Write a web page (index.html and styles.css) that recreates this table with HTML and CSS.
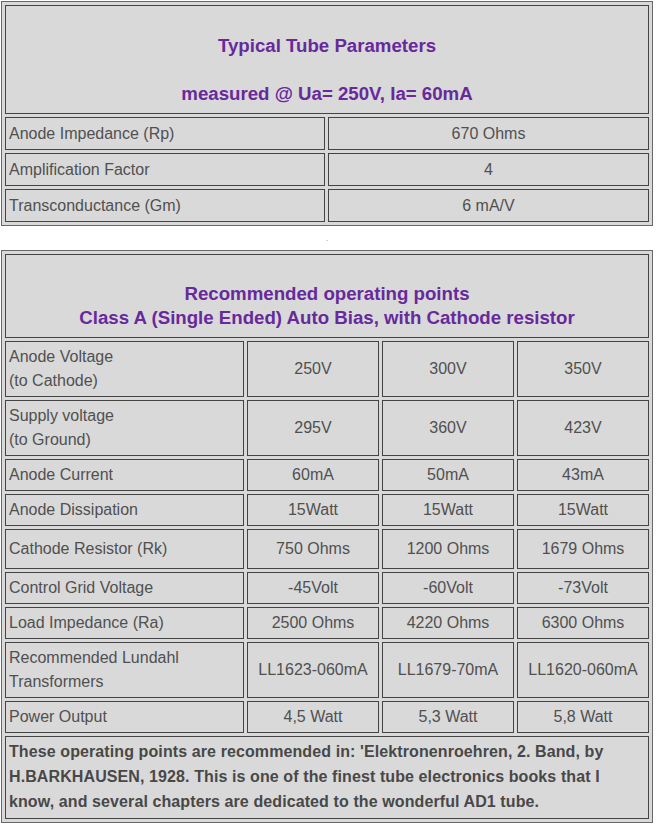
FILE: index.html
```html
<!DOCTYPE html>
<html>
<head>
<meta charset="utf-8">
<link rel="stylesheet" href="styles.css">
</head>
<body>
<div class="page">
  <table class="tbl tbl-params">
    <colgroup><col class="c-label1"><col class="c-val1"></colgroup>
    <tr>
      <td colspan="2" class="head head1">
        <div class="hline">Typical Tube Parameters</div>
        <div class="hline hline-gap">measured @ Ua= 250V, Ia= 60mA</div>
      </td>
    </tr>
    <tr class="r1"><td>Anode Impedance (Rp)</td><td class="val">670 Ohms</td></tr>
    <tr class="r1"><td>Amplification Factor</td><td class="val">4</td></tr>
    <tr class="r1"><td>Transconductance (Gm)</td><td class="val">6 mA/V</td></tr>
  </table>

  <div class="sep">.</div>

  <table class="tbl tbl-points">
    <colgroup><col class="c-label2"><col class="c-val2"><col class="c-val2"><col class="c-val2"></colgroup>
    <tr>
      <td colspan="4" class="head head2">
        <div class="hline2">Recommended operating points</div>
        <div class="hline2">Class A (Single Ended) Auto Bias, with Cathode resistor</div>
      </td>
    </tr>
    <tr><td>Anode Voltage<br>(to Cathode)</td><td class="val">250V</td><td class="val">300V</td><td class="val">350V</td></tr>
    <tr><td>Supply voltage<br>(to Ground)</td><td class="val">295V</td><td class="val">360V</td><td class="val">423V</td></tr>
    <tr><td>Anode Current</td><td class="val">60mA</td><td class="val">50mA</td><td class="val">43mA</td></tr>
    <tr><td>Anode Dissipation</td><td class="val">15Watt</td><td class="val">15Watt</td><td class="val">15Watt</td></tr>
    <tr class="tall"><td>Cathode Resistor (Rk)</td><td class="val">750 Ohms</td><td class="val">1200 Ohms</td><td class="val">1679 Ohms</td></tr>
    <tr><td>Control Grid Voltage</td><td class="val">-45Volt</td><td class="val">-60Volt</td><td class="val">-73Volt</td></tr>
    <tr><td>Load Impedance (Ra)</td><td class="val">2500 Ohms</td><td class="val">4220 Ohms</td><td class="val">6300 Ohms</td></tr>
    <tr><td>Recommended Lundahl<br>Transformers</td><td class="val">LL1623-060mA</td><td class="val">LL1679-70mA</td><td class="val">LL1620-060mA</td></tr>
    <tr><td>Power Output</td><td class="val">4,5 Watt</td><td class="val">5,3 Watt</td><td class="val">5,8 Watt</td></tr>
    <tr>
      <td colspan="4" class="note">These operating points are recommended in: 'Elektronenroehren, 2. Band, by H.BARKHAUSEN, 1928. This is one of the finest tube electronics books that I know, and several chapters are dedicated to the wonderful AD1 tube.</td>
    </tr>
  </table>
</div>
</body>
</html>
```

FILE: styles.css
```css
html, body {
  margin: 0;
  padding: 0;
  background: #ffffff;
}

.page {
  padding: 1px 0 0 1px;
  font-family: "Liberation Sans", Arial, sans-serif;
  font-size: 16px;
  color: #505050;
}

.tbl {
  width: 652px;
  table-layout: fixed;
  border-collapse: separate;
  border-spacing: 3px;
  border: 1px solid #686868;
  background: #d9d9d9;
}

.tbl td {
  box-sizing: border-box;
  border: 1px solid #444444;
  padding: 3px 3px;
  line-height: 24px;
  vertical-align: middle;
  color: #505050;
}

.c-label1 { width: 320px; }
.c-val1 { width: 321px; }
.c-label2 { width: 239px; }
.c-val2 { width: 132px; }

.tbl .val {
  text-align: center;
}

.tbl-params .r1 td {
  padding-top: 4px;
  padding-bottom: 3px;
}

.tbl .head {
  text-align: center;
  font-weight: bold;
  font-size: 18.67px;
  color: #67299b;
}

.tbl .head1 {
  padding: 26px 3px 5px;
}

.hline {
  line-height: 28px;
}

.hline-gap {
  margin-top: 20px;
}

.tbl .head2 {
  padding: 27px 3px 7px;
}

.hline2 {
  line-height: 24px;
}

.tbl .tall td {
  padding-top: 7px;
  padding-bottom: 7px;
}

.sep {
  height: 24px;
  width: 652px;
  text-align: center;
  font-size: 9px;
  line-height: 24px;
  color: #a0a0a0;
}

.tbl .note {
  font-weight: bold;
  line-height: 25px;
  letter-spacing: 0.1px;
  padding: 2px 3px 4px;
  color: #484848;
}
```
